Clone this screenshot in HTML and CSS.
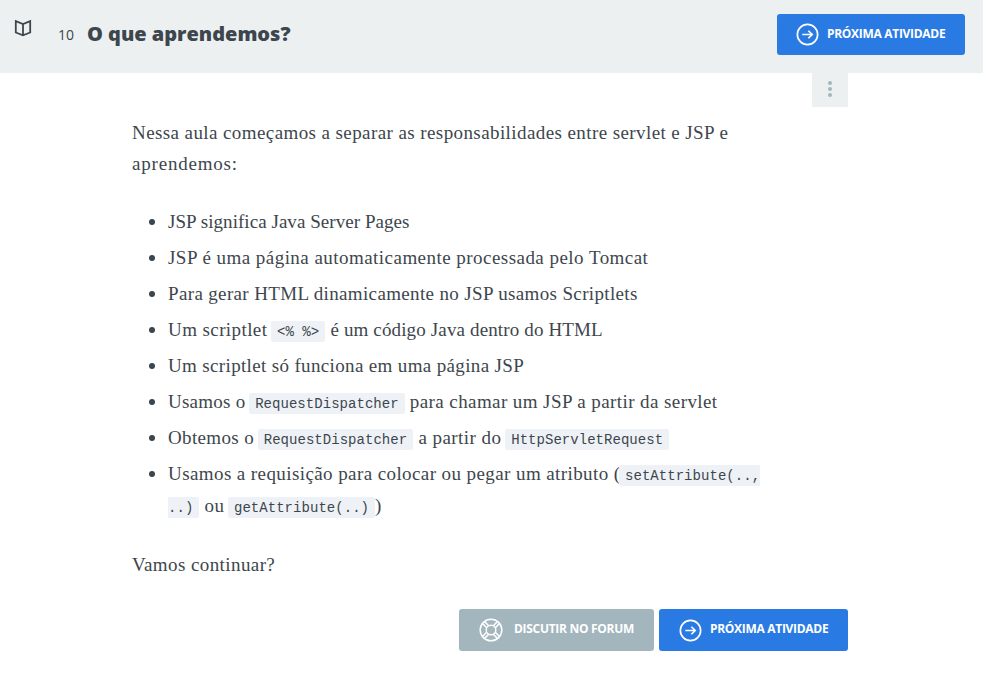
FILE: index.html
```html
<!DOCTYPE html>
<html lang="pt-BR">
<head>
<meta charset="utf-8">
<title>O que aprendemos?</title>
<link rel="stylesheet" href="styles.css">
</head>
<body>
<header class="header">
  <svg class="book" viewBox="0 0 18 18"><path d="M1.800 2.200 9 5.100l7.200-2.900v11.300L9 16.300l-7.200-2.800zM9 5.100v11.200"/></svg>
  <h1 class="title"><span class="number">10</span><span class="name">O que aprendemos?</span></h1>
  <a class="button">
    <svg class="icon" viewBox="0 0 22 22"><circle cx="11" cy="11" r="9.700"/><path d="M6 11h9.500M11.800 7.400l3.700 3.600-3.700 3.600"/></svg>
    <span>PRÓXIMA ATIVIDADE</span>
  </a>
</header>
<main class="content">
  <div class="menu"><i></i><i></i><i></i></div>
  <article class="text">
    <p>Nessa aula começamos a separar as responsabilidades entre servlet e JSP e<br><span class="track-8">aprendemos:</span></p>
    <ul>
      <li><span class="track-0">JSP significa Java Server Pages</span></li>
      <li><span class="track-5">JSP é uma página automaticamente processada pelo Tomcat</span></li>
      <li><span class="track-3">Para gerar HTML dinamicamente no JSP usamos Scriptlets</span></li>
      <li>Um scriptlet <code>&lt;% %&gt;</code> <span class="track-1">é um código Java dentro do HTML</span></li>
      <li><span class="track-3">Um scriptlet só funciona em uma página JSP</span></li>
      <li><span class="track-2">Usamos o</span> <code>RequestDispatcher</code> para chamar um JSP a partir da servlet</li>
      <li><span class="track-3">Obtemos o</span> <code>RequestDispatcher</code> <span class="track-5">a partir do</span> <code>HttpServletRequest</code></li>
      <li>Usamos a requisição para colocar ou pegar um atributo (<code>setAttribute(..,<br>..)</code> ou <code>getAttribute(..)</code>)</li>
    </ul>
    <p>Vamos continuar?</p>
  </article>
  <footer class="actions">
    <a class="button forum">
      <svg class="icon" viewBox="0 0 24 24"><circle cx="12" cy="12" r="10.800"/><circle cx="12" cy="12" r="4.800"/><path d="M7.700 9.700 3.600 5.600M9.700 7.700 5.600 3.600M14.300 7.700l4.100-4.100M16.300 9.700l4.100-4.100M16.300 14.300l4.100 4.100M14.300 16.300l4.100 4.100M9.700 16.300l-4.100 4.100M7.700 14.300l-4.100 4.100"/></svg>
      <span>DISCUTIR NO FORUM</span>
    </a>
    <a class="button">
      <svg class="icon" viewBox="0 0 22 22"><circle cx="11" cy="11" r="9.700"/><path d="M6 11h9.500M11.800 7.400l3.700 3.600-3.700 3.600"/></svg>
      <span>PRÓXIMA ATIVIDADE</span>
    </a>
  </footer>
</main>
</body>
</html>
```
FILE: styles.css
```css
* { box-sizing: border-box; }
body { margin: 0; background: #fff; color: #3d464d; font-family: "Open Sans", sans-serif; }
.header { display: flex; align-items: flex-start; height: 73px; padding: 14px 18px 0 14px; background: #ecf0f1; }
.book { width: 18px; height: 18px; margin-top: 5px; fill: none; stroke: #3d464d; stroke-width: 1.8; }
.title { display: flex; align-items: baseline; margin: 4px auto 0 26px; font-size: 20px; line-height: 32px; }
.number { position: relative; top: -1px; width: 29px; font-size: 14px; font-weight: 400; }
.name { font-weight: 800; letter-spacing: -0.02px; }
.button { display: flex; align-items: center; width: 188px; height: 41px; padding-left: 19px; gap: 8px; border-radius: 3px; background: #2a7ae4; color: #fff; font-size: 12px; font-weight: 700; letter-spacing: -0.3px; white-space: nowrap; }
.button span { margin-top: -3px; }
.icon { flex: none; width: 23px; height: 23px; fill: none; stroke: currentColor; stroke-width: 1.6; }
.content { width: 716px; margin-left: 132px; }
.menu { display: flex; flex-direction: column; align-items: center; gap: 2px; width: 36px; height: 34px; margin-left: auto; padding-top: 8px; background: #ecf0f1; }
.menu i { width: 4px; height: 4px; border-radius: 50%; background: #a3b5bd; }
.text { padding-top: 10px; font-family: "Liberation Serif", serif; font-size: 19px; letter-spacing: 0.41px; line-height: 31px; white-space: nowrap; }
.track-0 { letter-spacing: 0.05px; }
.track-1 { letter-spacing: 0.14px; }
.track-2 { letter-spacing: 0.25px; }
.track-3 { letter-spacing: 0.35px; }
.track-5 { letter-spacing: 0.46px; }
.track-8 { letter-spacing: 0.8px; }
p { margin: 0; }
ul { margin: 26px 0 27px; padding-left: 36px; line-height: 32px; }
li { margin-bottom: 3px; }
li:last-child { margin-bottom: 0; }
li::marker { font-size: 21px; }
code { margin-left: -1.5px; padding: 3px 6px 2px; border-radius: 2px; background: #eef2f6; font-family: "Liberation Mono", monospace; font-size: 14px; line-height: 1; letter-spacing: 0.04px; }
.actions { display: flex; justify-content: flex-end; gap: 5px; margin-top: 29px; }
.actions .button { width: 189px; height: 42px; padding-left: 20px; }
.actions .forum { width: 195px; gap: 11px; background: #a3b5bd; }
.forum .icon { width: 24px; height: 24px; stroke-width: 1.5; }
```
